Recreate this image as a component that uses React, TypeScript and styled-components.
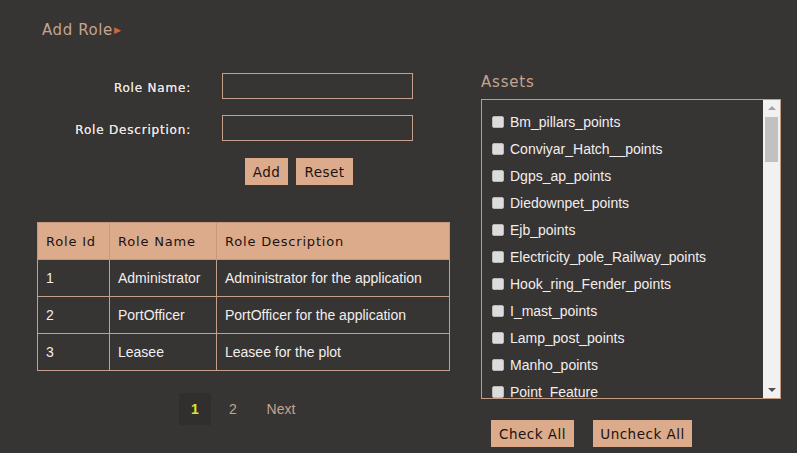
import React from 'react';
import styled, { createGlobalStyle } from 'styled-components';

const GlobalStyle = createGlobalStyle`
  body {
    margin: 0;
    background: #373434;
  }
`;

const Page = styled.div`
  display: flex;
  width: 797px;
  height: 453px;
  overflow: hidden;
  background: #373434;
  font-family: "DejaVu Sans", sans-serif;
`;

const LeftColumn = styled.div`
  width: 444px;
  padding-left: 37px;
`;

const RightColumn = styled.div`
  flex: 1;
  padding-top: 72px;
`;

const Title = styled.h2`
  margin: 20px 0 0 5px;
  font-size: 15px;
  font-weight: normal;
  letter-spacing: 0.6px;
  line-height: 20px;
  color: #c4a48e;
`;

const Arrow = styled.span`
  color: #d0673a;
  font-size: 9px;
  margin-left: 1px;
  vertical-align: 2px;
`;

const Form = styled.div`
  display: grid;
  grid-template-columns: 154px 191px;
  column-gap: 31px;
  row-gap: 16px;
  margin-top: 33px;
`;

const Label = styled.label`
  text-align: right;
  align-self: center;
  padding-top: 3px;
  font-size: 12px;
  letter-spacing: 0.8px;
  color: #ece6e2;
  text-shadow: 0 0 0.6px #ece6e2;
`;

const Input = styled.input`
  box-sizing: border-box;
  width: 191px;
  height: 26px;
  background: transparent;
  border: 1px solid #c6a18a;
  outline: none;
`;

const ButtonRow = styled.div`
  display: flex;
  gap: ${(p: { $gap: number }) => p.$gap}px;
  padding-left: ${(p: { $left: number }) => p.$left}px;
  margin-top: ${(p: { $top: number }) => p.$top}px;
`;

const Button = styled.button<{ $w: number }>`
  width: ${(p) => p.$w}px;
  height: 27px;
  padding: 0;
  border: none;
  background: #dcab8b;
  color: #1c1210;
  font-family: "DejaVu Sans", sans-serif;
  font-size: 13.5px;
  letter-spacing: 0.5px;
`;

const Table = styled.table`
  margin-top: 37px;
  width: 413px;
  border-collapse: collapse;
  font-family: "Liberation Sans", Arial, sans-serif;
  font-size: 14px;
`;

const Th = styled.th<{ $w: number }>`
  width: ${(p) => p.$w}px;
  height: 36px;
  padding: 0 0 0 8px;
  text-align: left;
  background: #dcab8b;
  border: 1px solid #c59a7c;
  color: #1c1210;
  font-family: "DejaVu Sans", sans-serif;
  font-size: 13px;
  font-weight: normal;
  letter-spacing: 0.8px;
`;

const Td = styled.td`
  height: 36px;
  padding: 0 0 0 8px;
  border: 1px solid #c6a18a;
  color: #f2eeec;
`;

const Pager = styled.div`
  display: flex;
  align-items: center;
  margin: 22px 0 0 142px;
  font-family: "Liberation Sans", Arial, sans-serif;
  font-size: 14px;
`;

const PageLink = styled.span<{ $active?: boolean }>`
  display: flex;
  align-items: center;
  justify-content: center;
  min-width: 32px;
  height: 32px;
  padding: 0 ${(p) => (p.$active ? 0 : 4)}px;
  margin-right: 8px;
  background: ${(p) => (p.$active ? '#312e2e' : 'transparent')};
  color: ${(p) => (p.$active ? '#e6e02a' : '#c4a48e')};
  font-weight: ${(p) => (p.$active ? 'bold' : 'normal')};

  &:first-child {
    margin-right: 2px;
  }
`;

const AssetsTitle = styled.h3`
  margin: 0;
  font-size: 15px;
  font-weight: normal;
  letter-spacing: 0.8px;
  line-height: 20px;
  color: #c4a48e;
`;

const AssetBox = styled.div`
  position: relative;
  box-sizing: border-box;
  width: 300px;
  height: 300px;
  margin-top: 7px;
  border: 1px solid #c29c82;
  overflow: hidden;
`;

const AssetList = styled.ul`
  list-style: none;
  margin: 0;
  padding: 8px 0 0 10px;
`;

const AssetItem = styled.li`
  display: flex;
  align-items: center;
  height: 27px;
  font-family: "Liberation Sans", Arial, sans-serif;
  font-size: 14px;
  color: #f2eeec;
`;

const Box = styled.span`
  box-sizing: border-box;
  width: 12px;
  height: 12px;
  margin-right: 6px;
  background: #dcdcdc;
  border: 1px solid #b9b9b9;
  border-radius: 2px;
`;

const Scrollbar = styled.div`
  position: absolute;
  top: 0;
  right: 0;
  width: 17px;
  height: 100%;
  background: #f1f1f1;
`;

const Thumb = styled.div`
  position: absolute;
  top: 17px;
  left: 2px;
  width: 13px;
  height: 45px;
  background: #c1c1c1;
`;

const ScrollArrow = styled.div<{ $down?: boolean }>`
  position: absolute;
  left: 5px;
  ${(p) => (p.$down ? 'bottom: 6px;' : 'top: 6px;')}
  width: 0;
  height: 0;
  border-left: 4px solid transparent;
  border-right: 4px solid transparent;
  ${(p) => (p.$down ? 'border-top: 4px solid #505050;' : 'border-bottom: 4px solid #a3a3a3;')}
`;

const assets = [
  'Bm_pillars_points',
  'Conviyar_Hatch__points',
  'Dgps_ap_points',
  'Diedownpet_points',
  'Ejb_points',
  'Electricity_pole_Railway_points',
  'Hook_ring_Fender_points',
  'I_mast_points',
  'Lamp_post_points',
  'Manho_points',
  'Point_Feature',
];

const roles = [
  { id: 1, name: 'Administrator', desc: 'Administrator for the application' },
  { id: 2, name: 'PortOfficer', desc: 'PortOfficer for the application' },
  { id: 3, name: 'Leasee', desc: 'Leasee for the plot' },
];

const App = () => {
  return (
    <Page>
      <GlobalStyle />
      <LeftColumn>
        <Title>
          Add Role<Arrow>▶</Arrow>
        </Title>
        <Form>
          <Label>Role Name:</Label>
          <Input />
          <Label>Role Description:</Label>
          <Input />
        </Form>
        <ButtonRow $gap={8} $left={208} $top={17}>
          <Button $w={43}>Add</Button>
          <Button $w={57}>Reset</Button>
        </ButtonRow>
        <Table>
          <thead>
            <tr>
              <Th $w={63}>Role Id</Th>
              <Th $w={98}>Role Name</Th>
              <Th $w={224}>Role Description</Th>
            </tr>
          </thead>
          <tbody>
            {roles.map((r) => (
              <tr key={r.id}>
                <Td>{r.id}</Td>
                <Td>{r.name}</Td>
                <Td>{r.desc}</Td>
              </tr>
            ))}
          </tbody>
        </Table>
        <Pager>
          <PageLink $active>1</PageLink>
          <PageLink>2</PageLink>
          <PageLink>Next</PageLink>
        </Pager>
      </LeftColumn>
      <RightColumn>
        <AssetsTitle>Assets</AssetsTitle>
        <AssetBox>
          <AssetList>
            {assets.map((a) => (
              <AssetItem key={a}>
                <Box />
                {a}
              </AssetItem>
            ))}
          </AssetList>
          <Scrollbar>
            <ScrollArrow />
            <Thumb />
            <ScrollArrow $down />
          </Scrollbar>
        </AssetBox>
        <ButtonRow $gap={19} $left={10} $top={21}>
          <Button $w={83}>Check All</Button>
          <Button $w={99}>Uncheck All</Button>
        </ButtonRow>
      </RightColumn>
    </Page>
  );
};

export default App;
